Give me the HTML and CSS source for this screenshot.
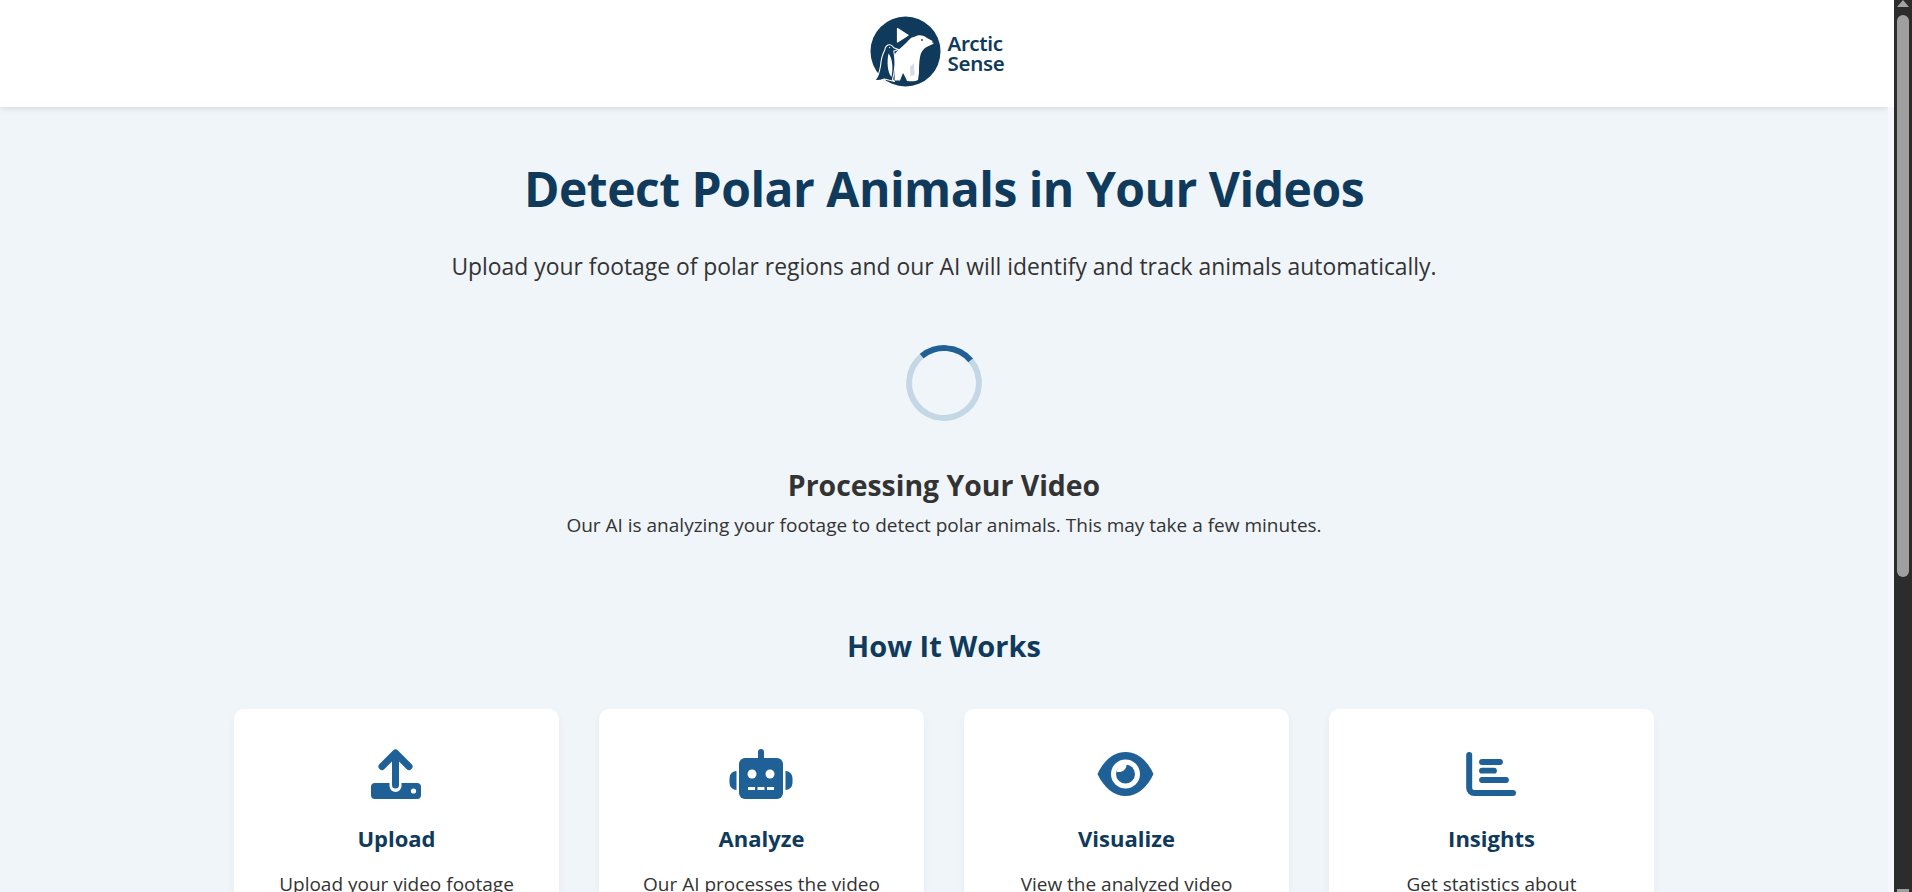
FILE: index.html
```html
<!DOCTYPE html>
<html lang="en">
<head>
<meta charset="utf-8">
<title>Arctic Sense</title>
<link rel="stylesheet" href="styles.css">
</head>
<body>
<div class="page">
  <header class="site-header">
    <div class="logo">
      <svg class="logo-mark" viewBox="0 0 71 71" aria-hidden="true">
        <circle cx="35.5" cy="35.5" r="35" fill="#0f3a5c"/>
        <path d="M27.5 12.5 L38 19.3 L27.5 26 Z" fill="#fff" stroke="#fff" stroke-width="1.2" stroke-linejoin="round"/>
        <path d="M24 40 C26 35 31 32 36 27 C39 24 41 21 44 21 C48 18.5 53 18.5 57 22 L63.5 25.5 C64.5 26.5 63.5 28 62 28.5 L56.5 31 C53 33 51 36 50 41 C49 47 49 52 49 57 L48 64 C46 65.5 41 65.5 37 65 C36 63 35 60 33 57 L30 64.5 L24.5 64.5 C25 58 24 48 24 40 Z" fill="#fff"/>
        <path d="M40 51 L44 47 L44.5 59 L40.5 60 Z" fill="#0f3a5c" opacity=".18"/>
        <circle cx="52" cy="24" r=".9" fill="#0f3a5c"/>
        <circle cx="63.2" cy="26" r="1" fill="#0f3a5c"/>
        <path d="M14.8 34 C15 30.5 17.5 28.5 20 28.8 C22 29 23 30.5 23.8 31.8 L28.5 33.5 L23.8 35 C24.5 39 25.5 45 24.8 51 C24.3 56 23.5 60 22.5 63.5 L24.5 65.5 L14.5 63 C12 64 8 65 5 64.5 C8 61 9.5 56 10.5 50 C11 44 12.5 38 14.8 34 Z" fill="#0f3a5c" stroke="#fff" stroke-width="1.1" stroke-linejoin="round"/>
        <path d="M18.5 37.5 C22 42 23.5 50 21.5 61 C17.8 57 16.5 47 18.5 37.5 Z" fill="#fff"/>
        <circle cx="19.6" cy="31.6" r=".7" fill="#fff"/>
      </svg>
      <div class="logo-text"><span>Arctic</span><span>Sense</span></div>
    </div>
  </header>
  <main class="content">
    <h1 class="title">Detect Polar Animals in Your Videos</h1>
    <p class="lead">Upload your footage of polar regions and our AI will identify and track animals automatically.</p>
    <div class="spinner"></div>
    <h2 class="status-title">Processing Your Video</h2>
    <p class="status-text">Our AI is analyzing your footage to detect polar animals. This may take a few minutes.</p>
    <h2 class="section-title">How It Works</h2>
    <section class="cards">
      <article class="card">
        <div class="icon-box">
          <svg class="icon-upload" viewBox="0 0 50 50"><path d="M3 34 H18.5 V37 A6 6 0 0 0 30.5 37 V34 H46 A4 4 0 0 1 50 38 V46 A4 4 0 0 1 46 50 H4 A4 4 0 0 1 0 46 V38 A4 4 0 0 1 4 34 Z" fill="#1f6096"/><path d="M24.5 5 V36 M11 17.5 L24.5 4 L38 17.5" fill="none" stroke="#1f6096" stroke-width="7" stroke-linecap="round" stroke-linejoin="round"/><circle cx="42.5" cy="42" r="2.6" fill="#fff"/></svg>
        </div>
        <h3 class="card-title">Upload</h3>
        <p class="card-text">Upload your video footage</p>
      </article>
      <article class="card">
        <div class="icon-box">
          <svg class="icon-robot" viewBox="0 0 64 50"><rect x="29" y="0" width="6" height="12" rx="3" fill="#1f6096"/><rect x="10" y="9" width="44" height="41" rx="6" fill="#1f6096"/><path d="M7.5 22 V41 A7 7 0 0 1 0.5 34 V29 A7 7 0 0 1 7.5 22 Z M56.5 22 V41 A7 7 0 0 0 63.5 34 V29 A7 7 0 0 0 56.5 22 Z" fill="#1f6096"/><circle cx="23" cy="25" r="4.5" fill="#fff"/><circle cx="41" cy="25" r="4.5" fill="#fff"/><rect x="19" y="38" width="7" height="3" fill="#fff"/><rect x="28.5" y="38" width="7" height="3" fill="#fff"/><rect x="38" y="38" width="7" height="3" fill="#fff"/></svg>
        </div>
        <h3 class="card-title">Analyze</h3>
        <p class="card-text">Our AI processes the video</p>
      </article>
      <article class="card">
        <div class="icon-box">
          <svg class="icon-eye" viewBox="0 0 57 44"><path d="M0.5 22 C7 8 17 0 28.5 0 C40 0 50 8 56.5 22 C50 36 40 44 28.5 44 C17 44 7 36 0.5 22 Z" fill="#1f6096"/><circle cx="28.5" cy="22" r="14.5" fill="#fff"/><circle cx="28.5" cy="22" r="9.5" fill="#1f6096"/><path d="M29.5 12 C30 17 26 20.5 20 20 C19.5 15 24 11.5 29.5 12 Z" fill="#fff"/></svg>
        </div>
        <h3 class="card-title">Visualize</h3>
        <p class="card-text">View the analyzed video</p>
      </article>
      <article class="card">
        <div class="icon-box">
          <svg class="icon-chart" viewBox="0 0 50 44"><path d="M3.2 3 V36 A5 5 0 0 0 8.2 41 H47" fill="none" stroke="#1f6096" stroke-width="6" stroke-linecap="round"/><path d="M16 10 H34 M16 18.7 H28 M16 28 H40" fill="none" stroke="#1f6096" stroke-width="5.8" stroke-linecap="round"/></svg>
        </div>
        <h3 class="card-title">Insights</h3>
        <p class="card-text">Get statistics about</p>
      </article>
    </section>
  </main>
</div>
<div class="gutter"></div>
<div class="scrollbar">
  <div class="arrow-up"></div>
  <div class="thumb"></div>
  <div class="track"></div>
  <div class="arrow-down"></div>
</div>
</body>
</html>
```
FILE: styles.css
```css
* { box-sizing: border-box; }
html, body { margin: 0; height: 100%; overflow: hidden; }
body {
  display: flex;
  background: #f0f5fa;
  font-family: "Open Sans", "Noto Sans", sans-serif;
  color: #333;
}
.page { flex: 0 0 1888px; height: 892px; overflow: hidden; }
.gutter { flex: 0 0 6px; background: linear-gradient(#fff 107px, #f4f7fb 107px); }
.site-header {
  height: 107px;
  background: #fff;
  box-shadow: 0 2px 5px rgba(0,0,0,.1);
  display: flex;
  justify-content: center;
  align-items: center;
  position: relative;
}
.logo { display: flex; align-items: center; gap: 6px; margin-right: 13px; margin-top: -4px; }
.logo-mark { width: 71px; height: 71px; display: block; }
.logo-text { display: flex; flex-direction: column; font-size: 20.5px; line-height: 20px; font-weight: 600; color: #0f3a5c; font-family: "Noto Sans", sans-serif; letter-spacing: -.25px; margin-top: 3px; }
.content { display: flex; flex-direction: column; align-items: center; }
.title { margin: 44px 0 0; font-size: 48px; line-height: 76px; font-weight: 700; color: #0f3a5c; letter-spacing: -.5px; }
.lead { margin: 22px 0 0; font-size: 22.86px; line-height: 36px; }
.spinner {
  margin-top: 60px;
  width: 76px; height: 76px;
  border-radius: 50%;
  border: 6px solid #c3d7e5;
  border-top-color: #1f6096;
  transform: rotate(5deg);
}
.status-title { margin: 44px 0 0; font-size: 28.4px; line-height: 40px; font-weight: 700; color: #333; }
.status-text { margin: 6px 0 0; font-size: 19px; line-height: 28px; }
.section-title { margin: 87px 0 0; font-size: 29px; line-height: 40px; font-weight: 700; color: #0f3a5c; }
.cards { margin-top: 43px; display: flex; gap: 40px; }
.card {
  width: 325px;
  height: 400px;
  background: #fff;
  border-radius: 10px;
  box-shadow: 0 4px 8px rgba(0,0,0,.05);
  padding: 40px 24px;
  display: flex; flex-direction: column; align-items: center;
}
.icon-box { height: 50px; margin-right: 2px; display: flex; align-items: center; justify-content: center; }
.icon-upload { width: 50px; height: 50px; display: block; }
.icon-robot { width: 64px; height: 50px; display: block; }
.icon-eye { width: 57px; height: 44px; display: block; }
.icon-chart { width: 50px; height: 44px; display: block; }
.card-title { margin: 24px 0 0; font-size: 22px; line-height: 30px; font-weight: 700; color: #0f3a5c; }
.card-text { margin: 17px 0 0; font-size: 19px; line-height: 28px; text-align: center; }
.scrollbar { flex: 0 0 18px; height: 892px; background: #2c2c2c; display: flex; flex-direction: column; align-items: center; }
.arrow-up { width: 0; height: 0; border-left: 6px solid transparent; border-right: 6px solid transparent; border-bottom: 7px solid #a3a3a3; }
.thumb { margin-top: 8px; width: 12px; height: 562px; border-radius: 6px; background: #9f9f9f; }
.track { flex: 1; }
.arrow-down { width: 12px; height: 3px; background: #9f9f9f; }
```
